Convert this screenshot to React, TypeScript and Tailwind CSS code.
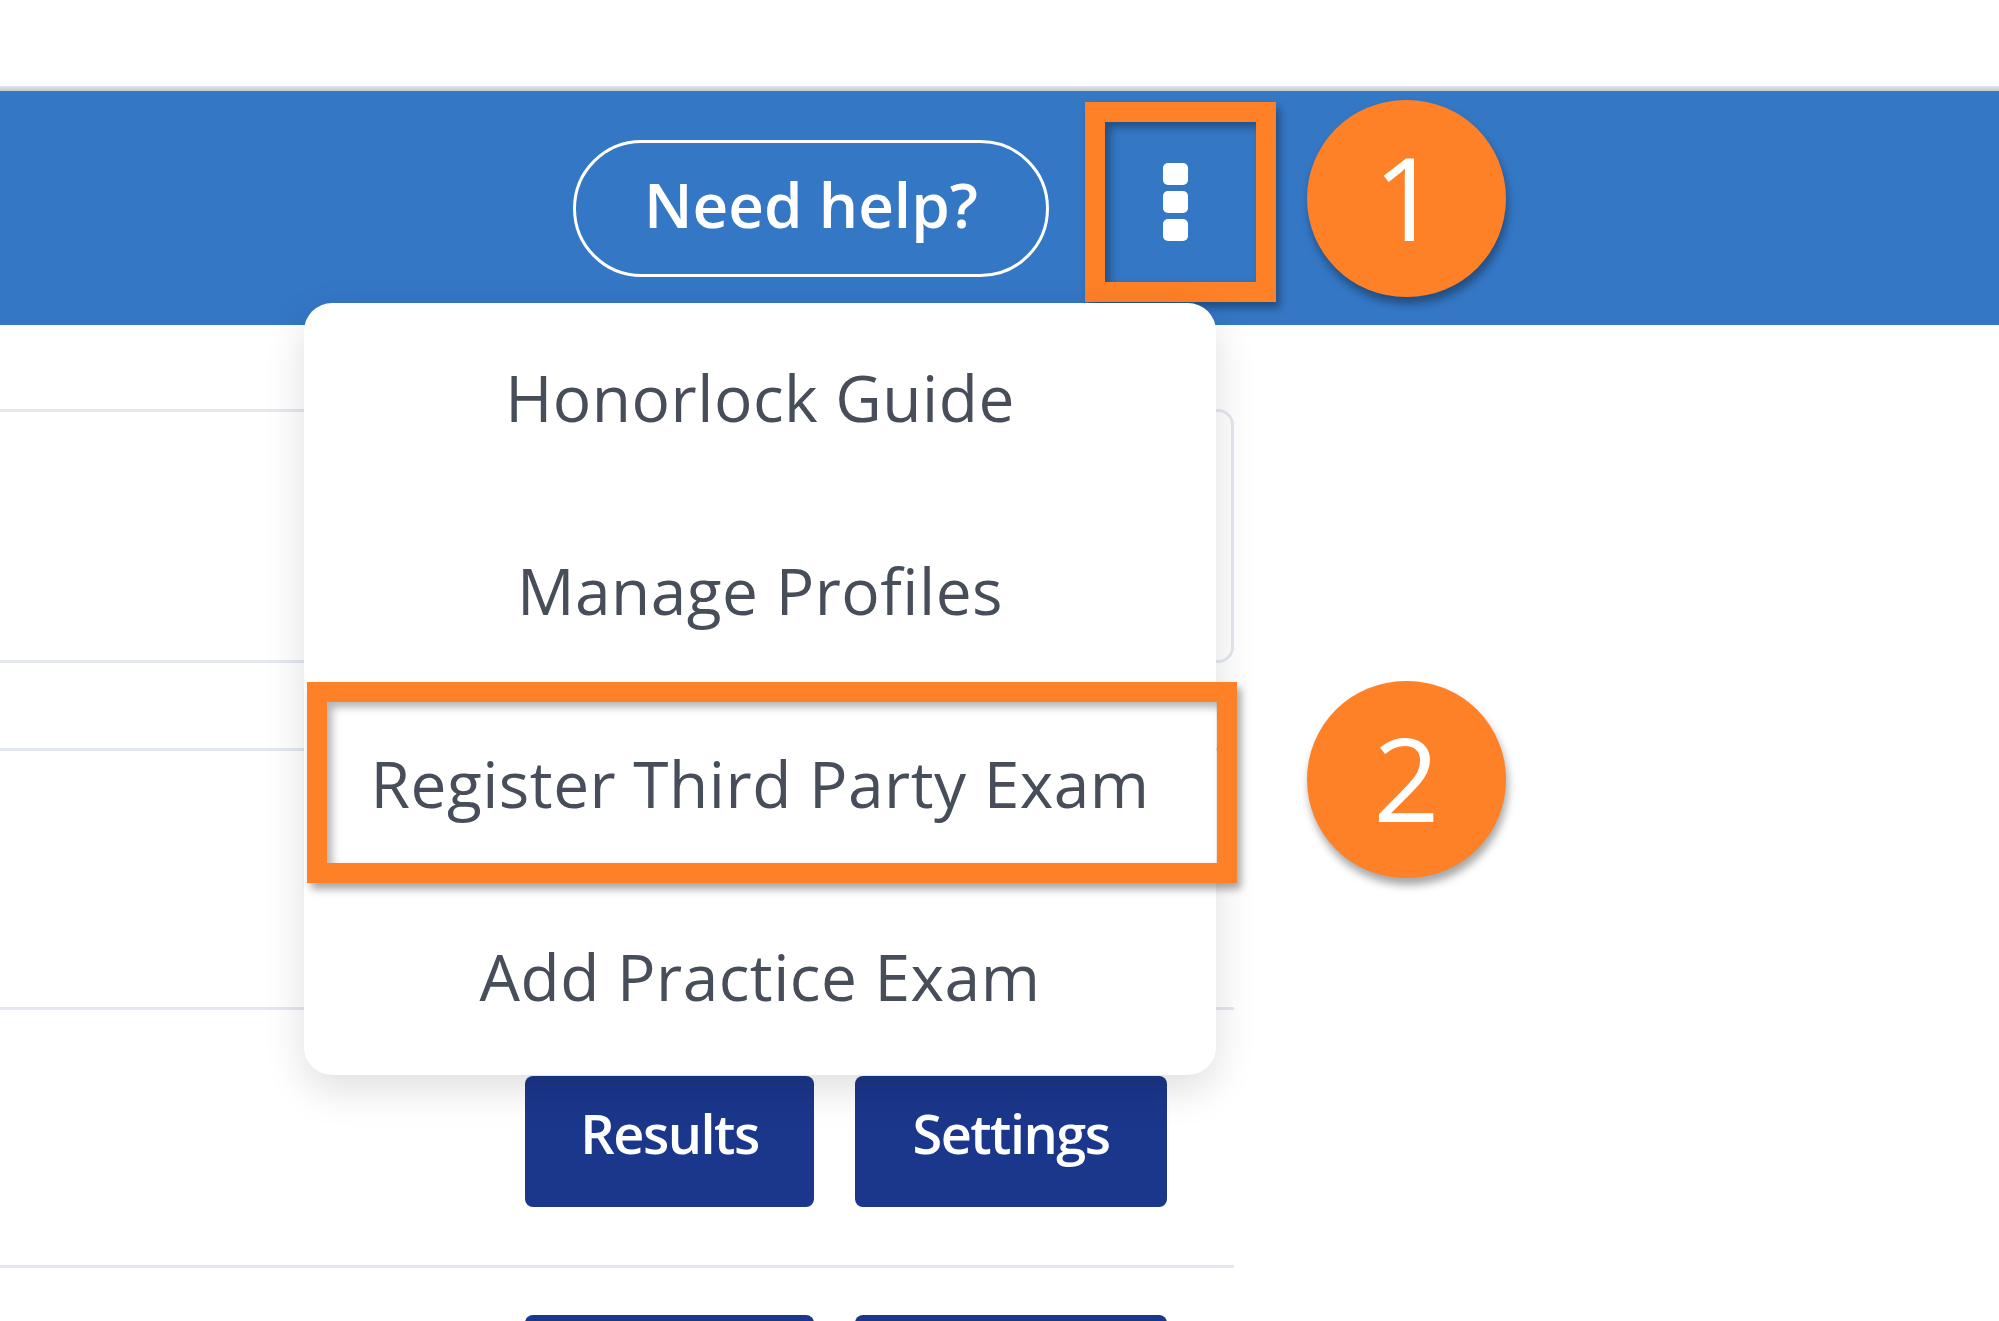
import React from "react"

const orange = "bg-[#fe8027]"

const menuItems = ["Honorlock Guide", "Manage Profiles", "Register Third Party Exam", "Add Practice Exam"]

const Kebab: React.FC = () => {
    return (
        <div className="flex flex-col gap-[6px] pr-[10px]">
            <span className="block w-[25px] h-[22px] rounded-[5px] bg-white" />
            <span className="block w-[25px] h-[22px] rounded-[5px] bg-white" />
            <span className="block w-[25px] h-[22px] rounded-[5px] bg-white" />
        </div>
    )
}

const Badge: React.FC<any> = ({ n }) => {
    return (
        <div className={`w-[199px] h-[197px] rounded-full ${orange} flex items-center justify-center shadow-[2px_7px_9px_rgba(0,0,0,0.35)]`}>
            <span className="text-white text-[116px] leading-none font-normal pb-[6px]">{n}</span>
        </div>
    )
}

const ButtonRow: React.FC<any> = ({ labels = true }) => {
    return (
        <div className="flex flex-row justify-end gap-[41px] pr-[67px]">
            <button className="w-[289px] h-[131px] rounded-[8px] bg-[#1b378b] text-white text-[54px] font-semibold tracking-[-1.5px] pb-[16px]">{labels ? "Results" : null}</button>
            <button className="w-[312px] h-[131px] rounded-[8px] bg-[#1b378b] text-white text-[54px] font-semibold tracking-[-1.5px] pb-[16px]">{labels ? "Settings" : null}</button>
        </div>
    )
}

export default function App() {
    return (
        <div className="relative w-[1999px] h-[1321px] overflow-hidden bg-white font-['Open_Sans',sans-serif]">
            <div className="h-[86px]" />
            <div className="h-[5px] bg-gradient-to-b from-[#e4e6e9] to-[#c3c8cf]" />

            {/* header */}
            <div className="h-[234px] bg-[#3477c5] flex flex-row items-start">
                <div className="ml-[573px] mt-[49px] w-[476px] h-[137px] rounded-full border-[3px] border-white flex items-center justify-center">
                    <span className="text-white text-[62px] font-semibold tracking-[0px] pb-[8px]">Need help?</span>
                </div>
                <div className="ml-[36px] mt-[11px] w-[191px] h-[200px] border-[20px] border-[#fe8027] flex items-center justify-center shadow-[4px_6px_8px_rgba(0,0,0,0.35),inset_5px_5px_8px_rgba(0,0,0,0.35)]">
                    <Kebab />
                </div>
                <div className="ml-[31px] mt-[9px]">
                    <Badge n="1" />
                </div>
            </div>

            {/* page body */}
            <div className="w-[1234px]">
                <div className="h-[84px]" />
                <div className="h-[254px] border-y-[3px] border-r-[3px] border-[#e3e8f0] rounded-r-[16px]" />
                <div className="h-[85px]" />
                <div className="h-[259px] border-t-[3px] border-[#e3e8f0] pt-[66px]">
                    <ButtonRow />
                </div>
                <div className="h-[258px] border-t-[3px] border-[#e3e8f0] pt-[66px]">
                    <ButtonRow />
                </div>
                <div className="border-t-[3px] border-[#e3e8f0] pt-[47px]">
                    <ButtonRow labels={false} />
                </div>
            </div>

            {/* dropdown menu */}
            <div className="absolute left-[304px] top-[303px] w-[912px] h-[772px] rounded-[28px] bg-white shadow-[0_14px_40px_rgba(0,0,0,0.13)] flex flex-col">
                {menuItems.map((item, i) => (
                    <div key={i} className="h-[193px] flex items-center justify-center">
                        <span className="text-[64px] text-[#474e5a] font-normal tracking-[0.5px] pb-[4px]">{item}</span>
                    </div>
                ))}
            </div>

            {/* annotation: highlighted item */}
            <div className="absolute left-[307px] top-[682px] w-[930px] h-[201px] border-[20px] border-[#fe8027] shadow-[4px_6px_8px_rgba(0,0,0,0.35),inset_5px_5px_8px_rgba(0,0,0,0.3)]" />
            <div className="absolute left-[1307px] top-[681px]">
                <Badge n="2" />
            </div>
        </div>
    )
}
